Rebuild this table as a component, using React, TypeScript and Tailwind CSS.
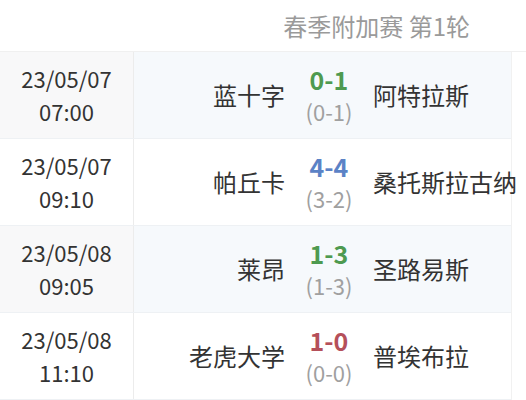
const matches = [
  { date: '23/05/07', time: '07:00', home: '蓝十字', away: '阿特拉斯', score: '0-1', half: '(0-1)', color: 'text-[#4e9a50]' },
  { date: '23/05/07', time: '09:10', home: '帕丘卡', away: '桑托斯拉古纳', score: '4-4', half: '(3-2)', color: 'text-[#5b82c6]' },
  { date: '23/05/08', time: '09:05', home: '莱昂', away: '圣路易斯', score: '1-3', half: '(1-3)', color: 'text-[#4e9a50]' },
  { date: '23/05/08', time: '11:10', home: '老虎大学', away: '普埃布拉', score: '1-0', half: '(0-0)', color: 'text-[#b5505a]' },
];

export default function App() {
  return (
    <div
      className="w-[526px] h-[400px] overflow-hidden bg-white"
      style={{ fontFamily: '"Noto Sans CJK SC", "Noto Sans", sans-serif' }}
    >
      <div className="h-[52px] flex items-center justify-end pr-[56px] text-[24px] text-[#9a9a9a] border-b border-[#f0f0f0]">
        春季附加赛 第1轮
      </div>
      <div className="w-[512px] border-r border-[#f1f1f1]">
        {matches.map((m, i) => (
          <div
            key={i}
            className={`h-[87px] flex border-b border-[#eef1f4] ${i % 2 === 0 ? 'bg-[#f6f9fc]' : 'bg-white'}`}
          >
            <div
              className={`w-[134px] shrink-0 flex flex-col items-center justify-center text-[22px] leading-[33px] text-[#333] border-r border-[#ececec] ${i % 2 === 0 ? 'bg-[#f8f8f9]' : 'bg-white'}`}
            >
              <span>{m.date}</span>
              <span>{m.time}</span>
            </div>
            <div className="flex-1 flex items-center">
              <div className="w-[151px] text-right text-[24px] text-[#333] whitespace-nowrap">{m.home}</div>
              <div className="w-[88px] flex flex-col items-center -mt-[2px]">
                <span className={`text-[25px] font-bold leading-[34px] ${m.color}`}>{m.score}</span>
                <span className="text-[22px] leading-[30px] text-[#a0a0a0]">{m.half}</span>
              </div>
              <div className="flex-1 text-[24px] text-[#333] whitespace-nowrap">{m.away}</div>
            </div>
          </div>
        ))}
      </div>
    </div>
  );
}
